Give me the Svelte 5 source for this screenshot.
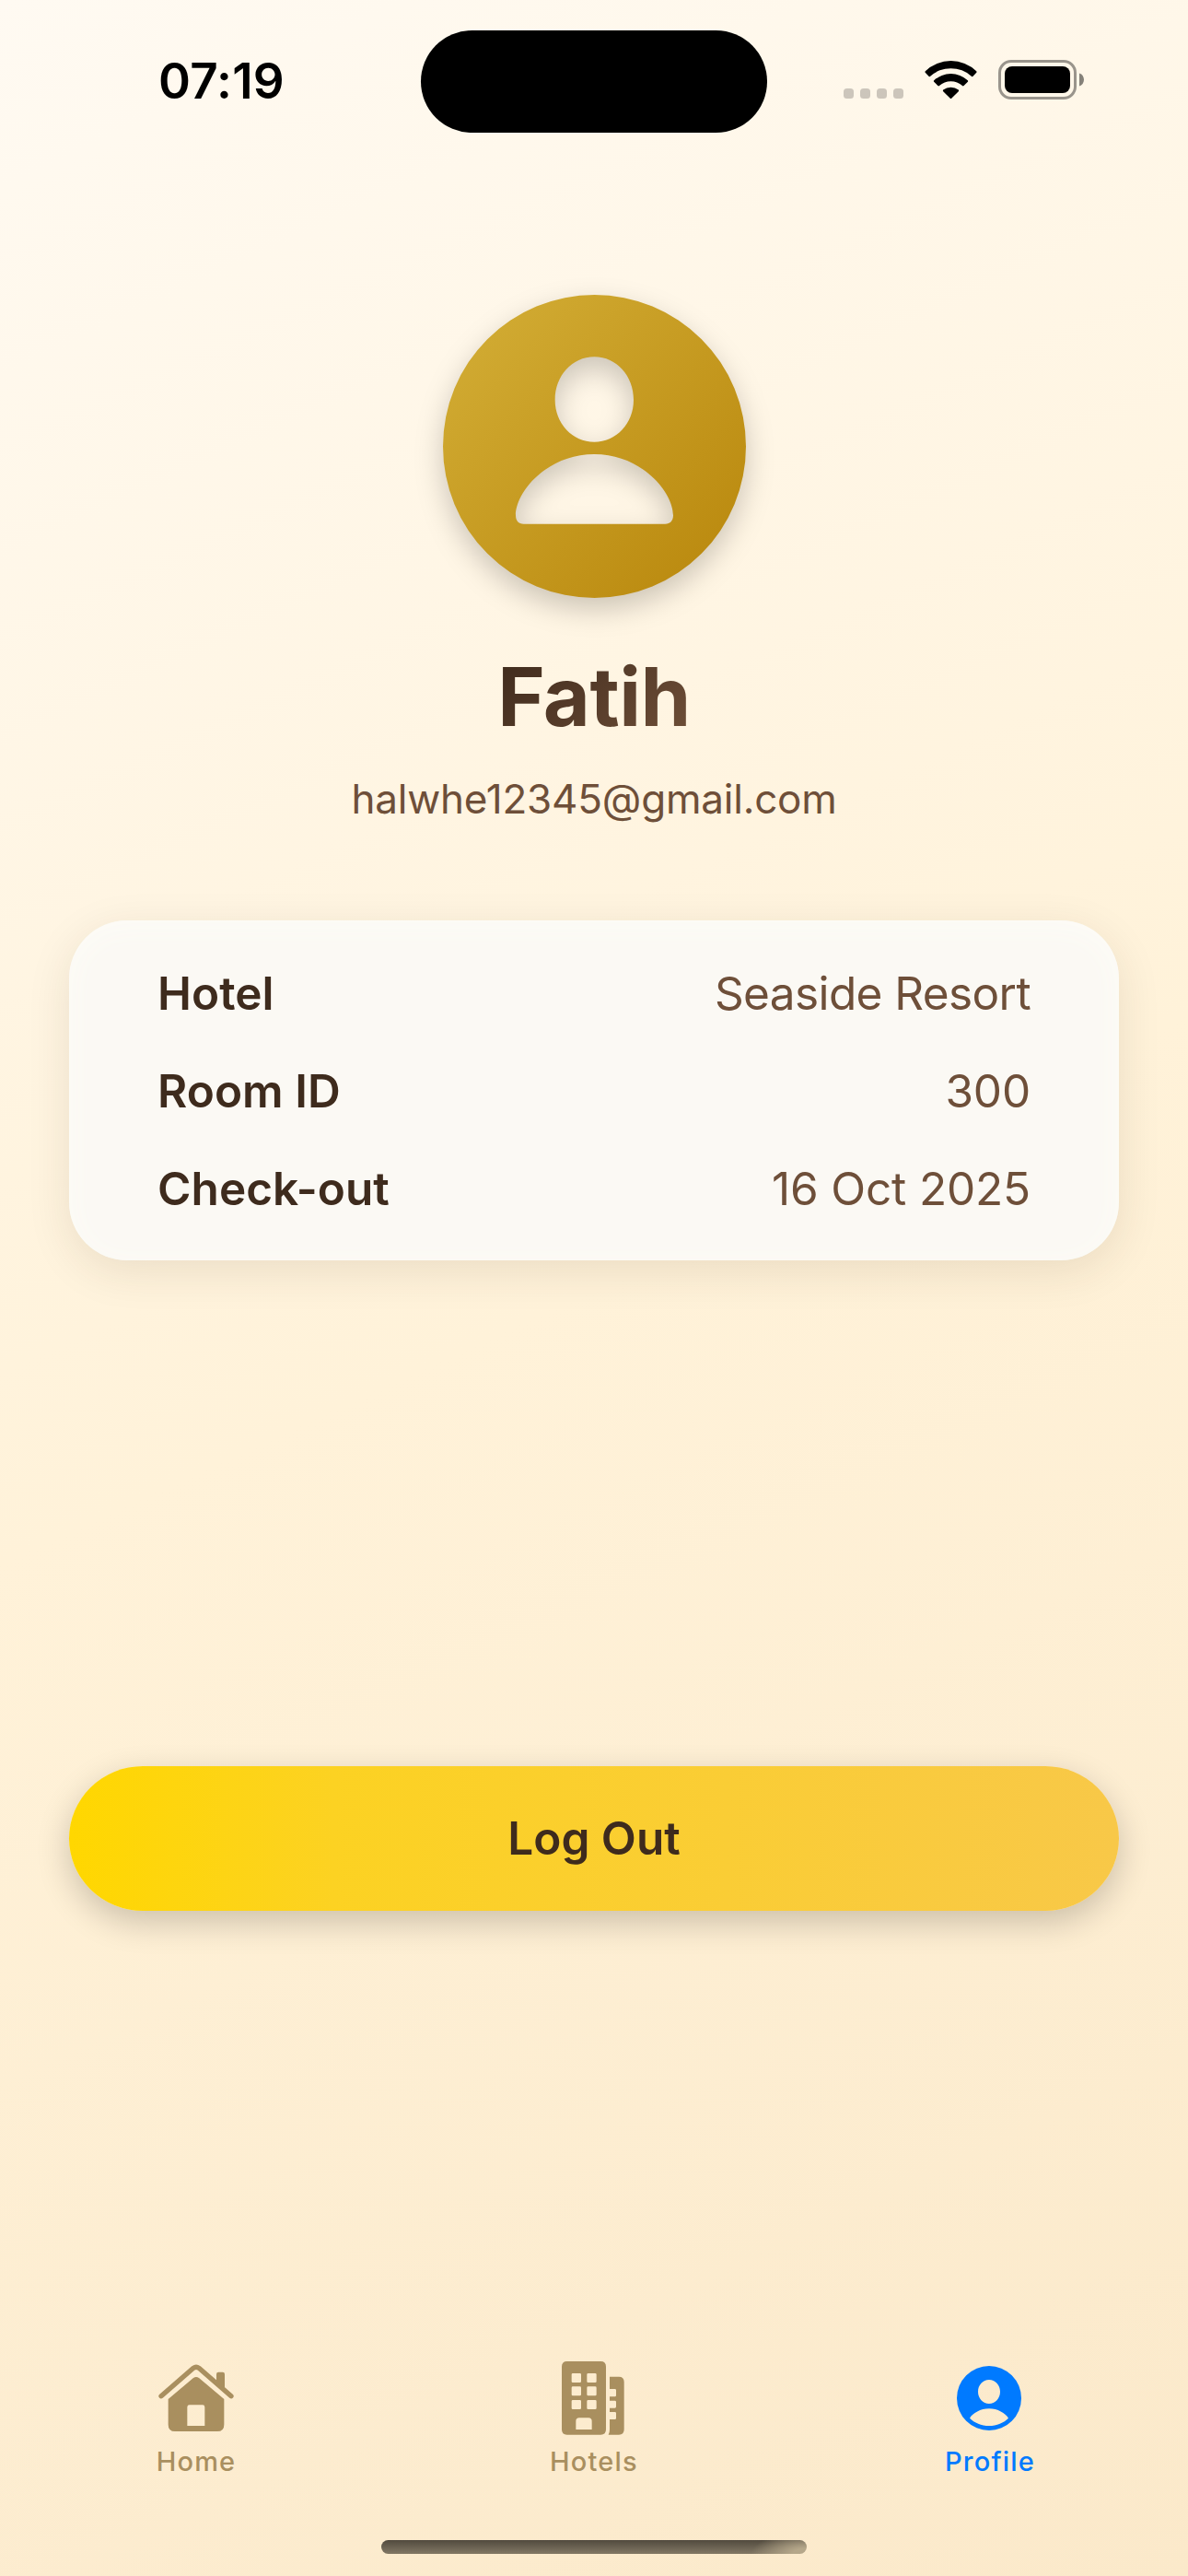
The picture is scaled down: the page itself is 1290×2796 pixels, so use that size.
<script>
  const details = [
    { label: 'Hotel', value: 'Seaside Resort', numeric: false },
    { label: 'Room ID', value: '300', numeric: true },
    { label: 'Check-out', value: '16 Oct 2025', numeric: true },
  ];
</script>

<div class="screen">
  <header class="status">
    <time>07:19</time>
    <div class="island"></div>
    <div class="indicators">
      <div class="dots"><i></i><i></i><i></i><i></i></div>
      <svg class="wifi" viewBox="0 0 57 43">
        <path d="M.8 12.2A40 40 0 0 1 56.2 12.2Q57 13 56.3 13.8L52.3 17.9Q51.6 18.5 50.8 17.8A33 33 0 0 0 6.2 17.8Q5.4 18.5 4.7 17.9L.7 13.8Q0 13 .8 12.2Z" />
        <path d="M10.2 22.2A27 27 0 0 1 46.8 22.2Q47.6 23 46.9 23.8L42.6 28Q41.8 28.8 41 28A19 19 0 0 0 16 28Q15.2 28.8 14.4 28L10.1 23.8Q9.4 23 10.2 22.2Z" />
        <path d="M20.2 32.6A13.5 13.5 0 0 1 36.8 32.6Q37.6 33.4 36.8 34.2L29.2 41.7Q28.5 42.4 27.8 41.7L20.2 34.2Q19.4 33.4 20.2 32.6Z" />
      </svg>
      <svg class="battery" viewBox="0 0 94 43">
        <rect x="1.5" y="1.500" width="82" height="40" rx="12.5" fill="none" stroke="#000" stroke-opacity=".4" stroke-width="3" />
        <rect x="7" y="7" width="71" height="29" rx="8" />
        <path d="M88 14.5C91 15.4 93 18.2 93 21.5S91 27.6 88 28.5Z" fill-opacity=".48" />
      </svg>
    </div>
  </header>

  <main>
    <svg class="avatar" viewBox="60 60 990 990">
      <defs>
        <linearGradient id="gold" x1="0" y1="0" x2="1" y2="1">
          <stop offset="0" stop-color="#d4af37" />
          <stop offset="1" stop-color="#b8860b" />
        </linearGradient>
      </defs>
      <path
        fill="url(#gold)"
        fill-rule="evenodd"
        d="M63 553.5a493.5 493.5 0 1 0 987 0a493.5 493.5 0 1 0 -987 0Z
           M556 262C629 262 684 325 684 402C684 480 627 539 556 539C485 539 428 480 428 402C428 325 483 262 556 262Z
           M556 579C712 579 813 704 813 778C813 796 803 806 787 806H326C309 806 300 796 300 778C300 704 400 579 556 579Z"
      />
    </svg>
    <h1>Fatih</h1>
    <p class="email">halwhe12345@gmail.com</p>

    <dl class="card">
      {#each details as row}
        <div class="row">
          <dt>{row.label}</dt>
          <dd class:numeric={row.numeric}>{row.value}</dd>
        </div>
      {/each}
    </dl>

    <button>Log Out</button>
  </main>

  <nav>
    <div class="tab">
      <svg viewBox="122 60 252 252">
        <path d="M134 182L239 91Q248 84 257 91L362 182" fill="none" stroke="currentColor" stroke-width="16" stroke-linecap="round" stroke-linejoin="round" />
        <path d="M314 137V111Q314 104 321 104H334Q341 104 341 111V160Z" />
        <path fill-rule="evenodd" d="M157 192L239 123Q248 117 257 123L339 192V275Q339 297 317 297H179Q157 297 157 275ZM219 279H276V218Q276 211 269 211H226Q219 211 219 218Z" />
      </svg>
      <span>Home</span>
    </div>
    <div class="tab">
      <svg viewBox="129 60 252 252">
        <path fill-rule="evenodd" d="M167 69H277Q294 69 294 86V291Q294 308 277 308H167Q150 308 150 291V86Q150 69 167 69Z
          M186 108Q182 108 182 112V134Q182 138 186 138H209Q213 138 213 134V112Q213 108 209 108Z
          M236 108Q232 108 232 112V134Q232 138 236 138H259Q263 138 263 134V112Q263 108 259 108Z
          M186 151Q182 151 182 155V177Q182 181 186 181H209Q213 181 213 177V155Q213 151 209 151Z
          M236 151Q232 151 232 155V177Q232 181 236 181H259Q263 181 263 177V155Q263 151 259 151Z
          M186 195Q182 195 182 199V221Q182 225 186 225H209Q213 225 213 221V199Q213 195 209 195Z
          M236 195Q232 195 232 199V221Q232 225 236 225H259Q263 225 263 221V199Q263 195 259 195Z
          M196 291V264Q196 253 207 253H237Q248 253 248 264V291Z" />
        <path d="M306 119H336Q353 119 353 136V291Q353 308 336 308H302Q306 301 306 291V258H323Q327 258 327 254V238Q327 234 323 234H306V221H323Q327 221 327 217V201Q327 197 323 197H306V184H323Q327 184 327 180V163Q327 159 323 159H306Z" />
      </svg>
      <span>Hotels</span>
    </div>
    <div class="tab active">
      <svg viewBox="129 60 252 252">
        <path fill-rule="evenodd" d="M147 189a105 105 0 1 0 210 0a105 105 0 1 0 -210 0Z
          M252 129C272 129 288 146 288 168C288 190 272 207 252 207C232 207 216 190 216 168C216 146 232 129 252 129Z
          M252 223C280 223 305 238 315 254C300 269 277 279 252 279C227 279 204 269 189 254C199 238 224 223 252 223Z" />
      </svg>
      <span>Profile</span>
    </div>
  </nav>
  <div class="home-indicator"></div>
</div>

<style>
  :global(body) {
    margin: 0;
  }
  .screen {
    box-sizing: border-box;
    width: 1290px;
    height: 2796px;
    display: flex;
    flex-direction: column;
    overflow: hidden;
    background: linear-gradient(155.23deg, #fffaf2 0%, #fff2d9 50%, #fbe9ca 100%);
    font-family: Inter, 'Liberation Sans', sans-serif;
    color: #3e2b1d;
  }
  .status {
    display: grid;
    grid-template-columns: 457px 376px 1fr;
    height: 177px;
    align-items: start;
    color: #000;
  }
  time {
    padding: 58px 0 0 172px;
    font-size: 53px;
    line-height: 60px;
    font-weight: 600;
    letter-spacing: 0.2px;
  }
  .island {
    margin-top: 33px;
    height: 111px;
    border-radius: 56px;
    background: #000;
  }
  .indicators {
    display: flex;
    align-items: flex-end;
    padding: 65px 0 0 83px;
  }
  .dots {
    display: flex;
    gap: 7px;
    margin: 0 23px 1px 0;
  }
  .dots i {
    width: 11px;
    height: 11px;
    border-radius: 3.5px;
    background: rgba(0, 0, 0, 0.2);
  }
  .wifi {
    width: 57px;
    height: 43px;
    margin-right: 23px;
  }
  .battery {
    width: 94px;
    height: 43px;
  }
  main {
    flex: 1;
    display: flex;
    flex-direction: column;
    align-items: center;
    padding: 143px 75px 0;
  }
  .avatar {
    width: 330px;
    height: 330px;
    overflow: visible;
    filter: drop-shadow(0 12px 15px rgba(0, 0, 0, 0.2));
  }
  h1 {
    margin: 56px 0 0;
    font-size: 88px;
    line-height: 100px;
    font-weight: 700;
    letter-spacing: -0.5px;
    background: linear-gradient(135deg, #3e2a1c, #6f4f38);
    background-clip: text;
    -webkit-background-clip: text;
    color: transparent;
  }
  .email {
    margin: 34px 0 0;
    font-size: 44px;
    line-height: 54px;
    letter-spacing: -0.2px;
    color: #6e4f39;
  }
  .card {
    box-sizing: border-box;
    width: 100%;
    height: 369px;
    margin: 105px 0 0;
    padding: 49px 96px 0;
    display: flex;
    flex-direction: column;
    gap: 46px;
    border-radius: 63px;
    background: #fbf9f4;
    box-shadow:
      0 12px 48px rgba(60, 40, 0, 0.1),
      inset 0 6px 30px #fdfcf7;
  }
  .row {
    display: flex;
    justify-content: space-between;
    font-size: 49.5px;
    line-height: 60px;
  }
  dt {
    font-weight: 600;
    letter-spacing: 0.05px;
  }
  dd {
    margin: 0;
    color: #6e4f39;
    letter-spacing: -0.6px;
  }
  .numeric {
    letter-spacing: -0.15px;
  }
  button {
    width: 100%;
    height: 157px;
    margin: 549px 0 0;
    padding: 0 0 2px;
    border: 0;
    border-radius: 80px / 78.5px;
    background: linear-gradient(90deg, #ffd700, #fcd222 25%, #f8c848);
    box-shadow: 0 12px 36px rgba(0, 0, 0, 0.2);
    font: 600 49.5px/60px Inter, 'Liberation Sans', sans-serif;
    letter-spacing: 0;
    color: #3e2b1d;
  }
  nav {
    display: grid;
    grid-template-columns: 426px 438px 422px;
    height: 197px;
  }
  .tab {
    display: flex;
    flex-direction: column;
    align-items: center;
    gap: 10px;
    color: #a98f5f;
    font-size: 29px;
    line-height: 36px;
    font-weight: 500;
    letter-spacing: 1.2px;
  }
  .tab svg {
    width: 84px;
    height: 84px;
  }
  .active {
    color: #007aff;
  }
  svg {
    display: block;
    flex: none;
    fill: currentColor;
  }
  .home-indicator {
    width: 462px;
    height: 15px;
    margin: 0 auto 24px;
    border-radius: 8px;
    background:
      radial-gradient(ellipse 60px 24px at 100% 100%, #b5a78a 25%, transparent),
      linear-gradient(#514a3e, #827865);
  }
</style>
